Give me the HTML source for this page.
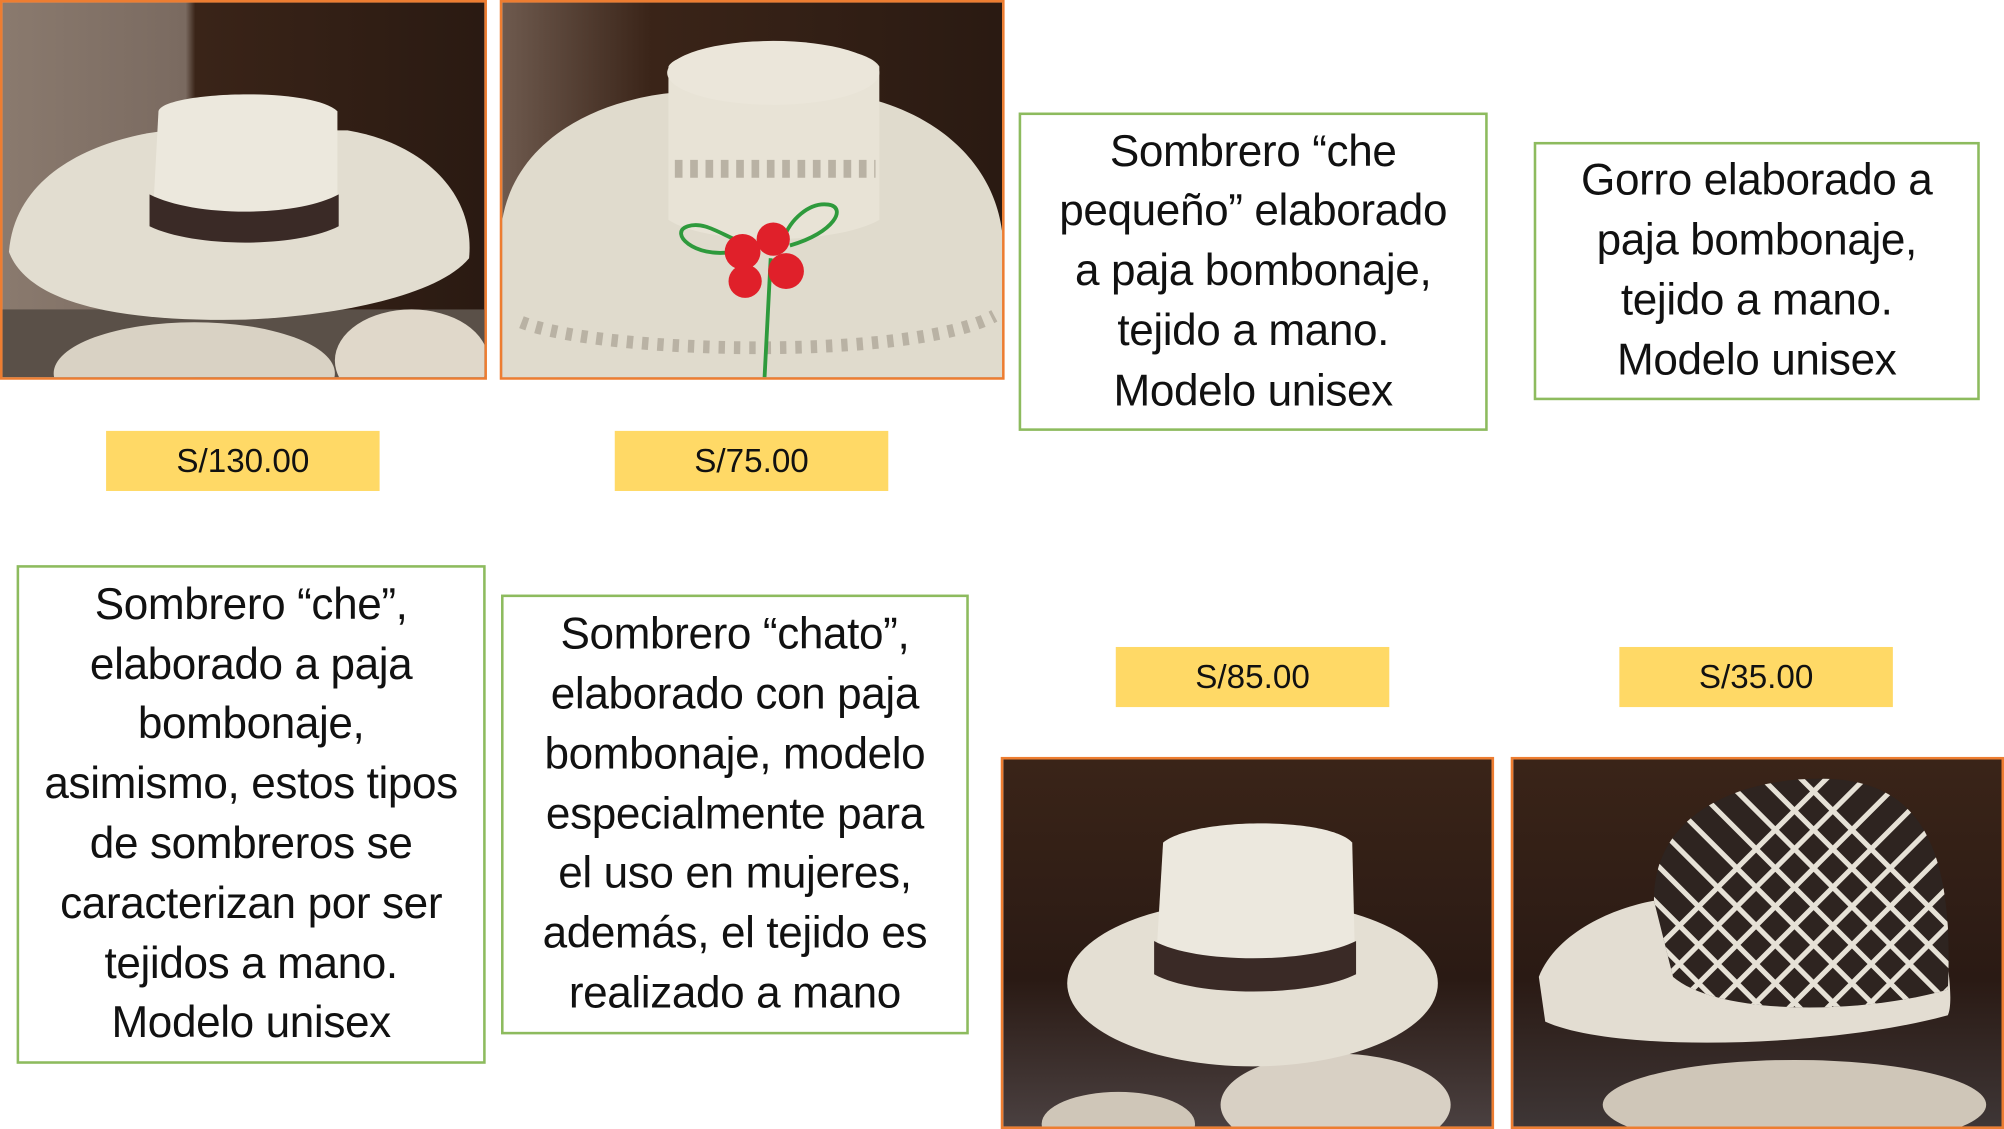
<!DOCTYPE html>
<html><head><meta charset="utf-8"><style>
html,body{margin:0;padding:0;background:#fff;width:2004px;height:1129px;overflow:hidden}
#c{position:absolute;left:0;top:0;width:1568px;height:883px;transform:scale(1.2781,1.2786);transform-origin:0 0;font-family:"Liberation Sans",sans-serif}
.a{position:absolute;box-sizing:border-box}
.box{border:2px solid #8dbb5e;display:flex;align-items:center;justify-content:center;text-align:center;font-size:34.5px;line-height:46.8px;color:#111;white-space:nowrap;letter-spacing:-0.3px}
.price{background:#ffd966;display:flex;align-items:center;justify-content:center;font-size:26px;color:#111}
.ph{border:2px solid #ed7d31;overflow:hidden}
</style></head><body><div id="c">

<div class="a ph" style="left:0;top:0;width:381px;height:297px;background:linear-gradient(90deg,#8a7a6e 0,#7a6a60 38%,#3a2418 40%,#2a1a12 100%)">
<svg width="381" height="297" style="position:absolute;left:0;top:0">
<rect x="0" y="240" width="381" height="60" fill="#5a5048"/>
<ellipse cx="150" cy="290" rx="110" ry="40" fill="#d9d2c4"/>
<ellipse cx="320" cy="280" rx="60" ry="40" fill="#e0d8ca"/>
<path d="M5 195 C10 130 80 105 130 100 L270 100 C330 110 370 150 365 200 C340 230 260 245 190 248 C90 250 20 235 5 195Z" fill="#e2ddd0"/>
<path d="M118 160 L122 85 C125 70 240 65 262 85 L262 160 C240 175 140 175 118 160Z" fill="#ece8dd"/>
<path d="M115 150 C150 168 230 168 263 150 L263 175 C230 192 150 192 115 175Z" fill="#3a2a26"/>
</svg></div>

<div class="a ph" style="left:391px;top:0;width:395px;height:297px;background:linear-gradient(90deg,#6e5a4e,#3a2418 30%,#2a1a12)">
<svg width="395" height="297" style="position:absolute;left:0;top:0">
<path d="M0 170 C10 110 70 75 140 70 L260 70 C340 80 395 130 392 200 L392 297 L0 297Z" fill="#e0dbcd"/>
<path d="M130 50 C140 30 280 25 295 50 L295 170 C260 190 160 190 130 170Z" fill="#e8e3d6"/>
<ellipse cx="212" cy="55" rx="83" ry="25" fill="#ebe6da"/>
<path d="M135 130 L292 130" stroke="#b9b2a4" stroke-width="14" stroke-dasharray="6 6"/>
<path d="M15 250 C80 275 320 280 385 245" stroke="#b9b2a4" stroke-width="10" stroke-dasharray="5 7" fill="none"/>
<path d="M210 200 L205 297 M180 195 C150 200 130 180 145 175 C160 170 175 185 195 190 M225 190 C260 180 270 160 255 158 C240 156 225 170 220 185" stroke="#2e9a3c" stroke-width="3" fill="none"/>
<circle cx="188" cy="195" r="14" fill="#e0202a"/><circle cx="212" cy="185" r="13" fill="#e0202a"/><circle cx="222" cy="210" r="14" fill="#e0202a"/><circle cx="190" cy="218" r="13" fill="#e0202a"/>
</svg></div>

<div class="a box" style="left:797px;top:88px;width:367px;height:249px">Sombrero “che<br>pequeño” elaborado<br>a paja bombonaje,<br>tejido a mano.<br>Modelo unisex</div>
<div class="a box" style="left:1200px;top:111px;width:349px;height:202px">Gorro elaborado a<br>paja bombonaje,<br>tejido a mano.<br>Modelo unisex</div>

<div class="a price" style="left:83px;top:337px;width:214px;height:47px">S/130.00</div>
<div class="a price" style="left:481px;top:337px;width:214px;height:47px">S/75.00</div>

<div class="a box" style="left:13px;top:442px;width:367px;height:390px">Sombrero “che”,<br>elaborado a paja<br>bombonaje,<br>asimismo, estos tipos<br>de sombreros se<br>caracterizan por ser<br>tejidos a mano.<br>Modelo unisex</div>
<div class="a box" style="left:392px;top:465px;width:366px;height:344px">Sombrero “chato”,<br>elaborado con paja<br>bombonaje, modelo<br>especialmente para<br>el uso en mujeres,<br>además, el tejido es<br>realizado a mano</div>

<div class="a price" style="left:873px;top:506px;width:214px;height:47px">S/85.00</div>
<div class="a price" style="left:1267px;top:506px;width:214px;height:47px">S/35.00</div>

<div class="a ph" style="left:783px;top:592px;width:386px;height:291px;background:linear-gradient(180deg,#3a2418,#2a1a14 60%,#4a4040)">
<svg width="386" height="291" style="position:absolute;left:0;top:0">
<ellipse cx="260" cy="270" rx="90" ry="40" fill="#d8d0c4"/>
<ellipse cx="90" cy="285" rx="60" ry="25" fill="#cfc6b8"/>
<ellipse cx="195" cy="175" rx="145" ry="65" fill="#e4dfd3"/>
<path d="M120 150 L125 65 C150 45 255 45 273 65 L275 150 C240 170 150 170 120 150Z" fill="#ece8de"/>
<path d="M118 142 C150 160 240 160 276 142 L276 168 C240 186 150 186 118 168Z" fill="#3a2a26"/>
</svg></div>

<div class="a ph" style="left:1182px;top:592px;width:386px;height:291px;background:linear-gradient(180deg,#3a2418,#2a1a14 60%,#3e3636)">
<svg width="386" height="291" style="position:absolute;left:0;top:0">
<clipPath id="cl"><path d="M110 110 C110 40 180 15 240 15 C320 15 345 70 340 180 C270 200 160 200 125 170 Z"/></clipPath>
<ellipse cx="220" cy="270" rx="150" ry="35" fill="#cfc6b8"/>
<path d="M20 170 C40 120 120 105 130 110 L330 110 C340 150 345 190 340 200 C250 225 80 230 25 205Z" fill="#e3ddd2"/>
<path d="M110 110 C110 40 180 15 240 15 C320 15 345 70 340 180 C270 200 160 200 125 170 Z" fill="#2e2420"/>
<g stroke="#e6e1d6" stroke-width="4" fill="none" clip-path="url(#cl)">
<path d="M60 0 L260 200 M90 0 L290 200 M120 0 L320 200 M150 0 L350 200 M180 0 L380 200 M210 0 L410 200 M30 0 L230 200 M0 0 L200 200 M-30 0 L170 200 M-60 20 L140 220"/>
<path d="M380 0 L180 200 M350 0 L150 200 M320 0 L120 200 M290 0 L90 200 M260 0 L60 200 M410 0 L210 200 M440 0 L240 200 M470 0 L270 200 M500 20 L300 220"/>
</g>
</svg></div>

</div></body></html>
